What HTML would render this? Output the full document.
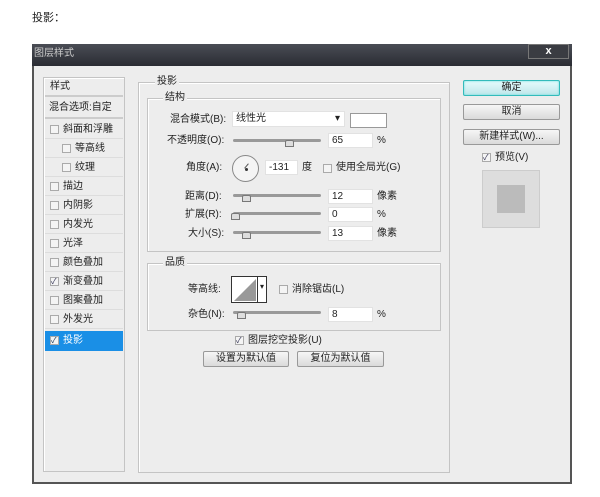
<!DOCTYPE html>
<html><head><meta charset="utf-8"><style>
*{margin:0;padding:0;box-sizing:border-box}
body{width:600px;height:497px;background:#fff;position:relative;overflow:hidden;font-family:"Liberation Sans","Noto Sans CJK SC",sans-serif;font-size:10px;color:#222}
.a{position:absolute}
.t{position:absolute;white-space:nowrap;line-height:12px}
.cb{position:absolute;width:9px;height:9px;border:1px solid #aaa;background:#f4f4f4}
.row{position:absolute;left:45px;width:78px;height:19px;border-bottom:1px solid #ddd}
.fld{position:absolute;background:#fff;border:1px solid #e2e2e2;height:15px;padding-left:3px;line-height:13px}
.sl{position:absolute;height:3px;background:#999;border-radius:2px}
.th{position:absolute;width:9px;height:7px;border:1px solid #777;background:#ddd;border-radius:2px 2px 0 0}
.btn{position:absolute;border:1px solid #999;border-radius:2px;background:linear-gradient(#f6f6f6,#dadada);text-align:center;line-height:14px}
.box{position:absolute;border:1px solid #c4c4c4;box-shadow:1px 1px 0 #fff inset}
</style></head><body>
<div class="t" style="left:32px;top:12px;font-size:11px">投影：</div>
<div class="a" style="left:32px;top:44px;width:540px;height:440px;background:#ededed;border:2px solid #555;border-top:none"></div>
<div class="a" style="left:32px;top:44px;width:540px;height:22px;background:linear-gradient(#4a4d55,#2a2c33)"></div>
<div class="t" style="left:34px;top:48px;color:#ccc">图层样式</div>
<div class="a" style="left:528px;top:44px;width:41px;height:15px;border:1px solid #777;background:#3a3c42;color:#fff;text-align:center;font-size:11px;line-height:13px;font-weight:bold">x</div>
<div class="box" style="left:43px;top:77px;width:82px;height:395px"></div>
<div class="row" style="top:78px;border-bottom:2px solid #ccc"><span class="t" style="left:5px;top:3px">样式</span></div>
<div class="row" style="top:97px;height:22px;border-bottom:2px solid #ccc"><span class="t" style="left:4px;top:5px">混合选项:自定</span></div>
<div class="row" style="top:120px"><span class="cb" style="left:5px;top:5px"></span><span class="t" style="left:18px;top:4px">斜面和浮雕</span></div>
<div class="row" style="top:139px"><span class="cb" style="left:17px;top:5px"></span><span class="t" style="left:30px;top:4px">等高线</span></div>
<div class="row" style="top:158px"><span class="cb" style="left:17px;top:5px"></span><span class="t" style="left:30px;top:4px">纹理</span></div>
<div class="row" style="top:177px"><span class="cb" style="left:5px;top:5px"></span><span class="t" style="left:18px;top:4px">描边</span></div>
<div class="row" style="top:196px"><span class="cb" style="left:5px;top:5px"></span><span class="t" style="left:18px;top:4px">内阴影</span></div>
<div class="row" style="top:215px"><span class="cb" style="left:5px;top:5px"></span><span class="t" style="left:18px;top:4px">内发光</span></div>
<div class="row" style="top:234px"><span class="cb" style="left:5px;top:5px"></span><span class="t" style="left:18px;top:4px">光泽</span></div>
<div class="row" style="top:253px"><span class="cb" style="left:5px;top:5px"></span><span class="t" style="left:18px;top:4px">颜色叠加</span></div>
<div class="row" style="top:272px"><span class="cb" style="left:5px;top:5px;font-size:8px;line-height:7px;color:#335">✓</span><span class="t" style="left:18px;top:4px">渐变叠加</span></div>
<div class="row" style="top:291px"><span class="cb" style="left:5px;top:5px"></span><span class="t" style="left:18px;top:4px">图案叠加</span></div>
<div class="row" style="top:310px"><span class="cb" style="left:5px;top:5px"></span><span class="t" style="left:18px;top:4px">外发光</span></div>
<div class="row" style="top:331px;height:20px;background:#1a8fe6;border:none"><span class="cb" style="left:5px;top:5px;font-size:8px;line-height:7px;color:#135">✓</span><span class="t" style="left:18px;top:4px;color:#fff">投影</span></div>

<div class="box" style="left:138px;top:82px;width:312px;height:391px"></div>
<div class="t" style="left:155px;top:76px;background:#ededed;padding:0 2px">投影</div>
<div class="box" style="left:147px;top:98px;width:294px;height:154px"></div>
<div class="t" style="left:163px;top:92px;background:#ededed;padding:0 2px">结构</div>
<div class="t" style="left:170px;top:114px">混合模式(B):</div>
<div class="fld" style="left:232px;top:111px;width:113px;height:16px">线性光<span class="a" style="right:4px;top:0">▾</span></div>
<div class="a" style="left:350px;top:113px;width:37px;height:15px;background:#fff;border:1px solid #999"></div>
<div class="t" style="left:167px;top:135px">不透明度(O):</div>
<div class="sl" style="left:233px;top:139px;width:88px"></div><div class="th" style="left:285px;top:140px"></div>
<div class="fld" style="left:328px;top:133px;width:45px">65</div><div class="t" style="left:377px;top:135px">%</div>
<div class="t" style="left:186px;top:162px">角度(A):</div>
<div class="a" style="left:232px;top:155px;width:27px;height:27px;border:1px solid #888;border-radius:50%;background:#f4f4f4"></div>
<div class="a" style="left:245px;top:168px;width:3px;height:3px;background:#333;border-radius:50%"></div>
<div class="a" style="left:246px;top:163px;width:1px;height:6px;background:#555;transform:rotate(40deg)"></div>
<div class="fld" style="left:265px;top:160px;width:33px">-131</div>
<div class="t" style="left:302px;top:162px">度</div>
<div class="cb" style="left:323px;top:164px"></div><div class="t" style="left:336px;top:162px">使用全局光(G)</div>
<div class="t" style="left:185px;top:191px">距离(D):</div>
<div class="sl" style="left:233px;top:194px;width:88px"></div><div class="th" style="left:242px;top:195px"></div>
<div class="fld" style="left:328px;top:189px;width:45px">12</div><div class="t" style="left:377px;top:191px">像素</div>
<div class="t" style="left:185px;top:209px">扩展(R):</div>
<div class="sl" style="left:233px;top:212px;width:88px"></div><div class="th" style="left:231px;top:213px"></div>
<div class="fld" style="left:328px;top:207px;width:45px">0</div><div class="t" style="left:377px;top:209px">%</div>
<div class="t" style="left:188px;top:228px">大小(S):</div>
<div class="sl" style="left:233px;top:231px;width:88px"></div><div class="th" style="left:242px;top:232px"></div>
<div class="fld" style="left:328px;top:226px;width:45px">13</div><div class="t" style="left:377px;top:228px">像素</div>

<div class="box" style="left:147px;top:263px;width:294px;height:68px"></div>
<div class="t" style="left:163px;top:257px;background:#ededed;padding:0 2px">品质</div>
<div class="t" style="left:188px;top:284px">等高线:</div>
<div class="a" style="left:231px;top:276px;width:36px;height:27px;border:1px solid #333;background:#fff"><svg width="26" height="25" class="a" style="left:0;top:0"><polygon points="2,24 24,2 24,24" fill="#999"/></svg><span class="a" style="left:25px;top:0;width:9px;height:25px;border-left:1px solid #333;text-align:center;line-height:20px;font-size:8px">▾</span></div>
<div class="cb" style="left:279px;top:285px"></div><div class="t" style="left:292px;top:284px">消除锯齿(L)</div>
<div class="t" style="left:188px;top:309px">杂色(N):</div>
<div class="sl" style="left:233px;top:311px;width:88px"></div><div class="th" style="left:237px;top:312px"></div>
<div class="fld" style="left:328px;top:307px;width:45px">8</div><div class="t" style="left:377px;top:309px">%</div>

<div class="cb" style="left:235px;top:336px;font-size:8px;line-height:7px;color:#335">✓</div><div class="t" style="left:248px;top:335px">图层挖空投影(U)</div>
<div class="btn" style="left:203px;top:351px;width:86px;height:16px">设置为默认值</div>
<div class="btn" style="left:297px;top:351px;width:87px;height:16px">复位为默认值</div>

<div class="btn" style="left:463px;top:80px;width:97px;height:16px;border:1px solid #3bb;box-shadow:0 0 2px #6dd inset;background:linear-gradient(#e6fbfc,#bfe6ea)">确定</div>
<div class="btn" style="left:463px;top:104px;width:97px;height:16px">取消</div>
<div class="btn" style="left:463px;top:129px;width:97px;height:16px">新建样式(W)...</div>
<div class="cb" style="left:482px;top:153px;font-size:8px;line-height:7px;color:#335">✓</div><div class="t" style="left:495px;top:152px">预览(V)</div>
<div class="a" style="left:482px;top:170px;width:58px;height:58px;background:#ddd;border:1px solid #ccc"></div>
<div class="a" style="left:497px;top:185px;width:28px;height:28px;background:#bbb"></div>
</body></html>
